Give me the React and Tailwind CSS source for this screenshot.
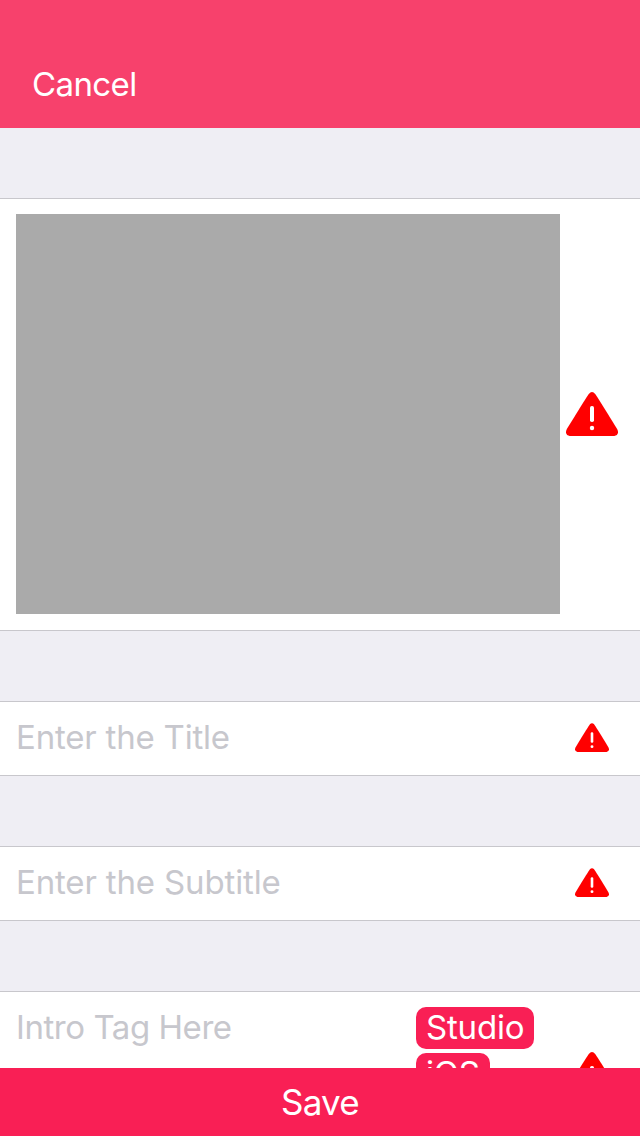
function Warning({ className }) {
  return (
    <svg viewBox="0 0 52 44" className={className} aria-hidden="true">
      <path d="M22.8 1.9Q26-1.7 29.2 1.9Q31 4.1 51 36.8Q54 42.6 48.4 44H3.6Q-2 42.6 1 36.8Q21 4.1 22.8 1.9Z" fill="#ff0000" />
      <rect x="24" y="14" width="4" height="16" rx="1.8" fill="#fff" />
      <circle cx="26" cy="36" r="2.2" fill="#fff" />
    </svg>
  );
}

function Field({ children, spacing }) {
  return (
    <div className="flex h-[75px] shrink-0 items-center justify-between border-y border-[#c8c7cc] bg-white pr-[31px] pb-0.5 pl-4">
      <span className={`pb-0.5 text-[33px] leading-10 whitespace-nowrap text-[#c7c7cd] ${spacing}`}>{children}</span>
      <Warning className="h-[29px] w-[34px]" />
    </div>
  );
}

export default function App() {
  return (
    <div className="flex h-[1136px] w-[640px] flex-col overflow-hidden bg-[#efeef4] font-['Inter',sans-serif] text-[33px] leading-10 font-normal">
      <header className="flex h-32 shrink-0 items-end bg-[#f7416c] pb-6 pl-8 text-white">
        <button className="tracking-[-0.6px]">Cancel</button>
      </header>
      <main className="flex min-h-0 flex-1 flex-col gap-[70px] overflow-hidden pt-[70px]">
        <section className="flex h-[433px] shrink-0 items-start border-y border-[#c8c7cc] bg-white pt-[15px] pl-4">
          <div className="h-[400px] w-[544px] bg-[#aaaaaa]" />
          <Warning className="mt-[178px] ml-1.5 h-11 w-[52px]" />
        </section>
        <Field spacing="tracking-[-0.2px]">Enter the Title</Field>
        <Field spacing="tracking-[-0.15px]">Enter the Subtitle</Field>
        <section className="flex h-[167px] shrink-0 items-start border-t border-[#c8c7cc] bg-white pl-4">
          <span className="w-[400px] pt-[15px] tracking-[-0.45px] text-[#c7c7cd]">Intro Tag Here</span>
          <div className="flex w-[150px] flex-col items-start gap-1 pt-[15px] text-white">
            <span className="h-[42px] w-[118px] rounded-[10px] bg-[#f91f55] pl-2.5 tracking-[-0.2px]">Studio</span>
            <span className="h-[42px] w-[74px] rounded-[10px] bg-[#f91f55] pl-2.5 tracking-[-0.2px]">iOS</span>
          </div>
          <Warning className="mt-[60px] h-11 w-[52px]" />
        </section>
      </main>
      <button className="flex h-[68px] shrink-0 items-center justify-center bg-[#f91f55] text-[35px] tracking-[-0.7px] text-white">
        Save
      </button>
    </div>
  );
}
